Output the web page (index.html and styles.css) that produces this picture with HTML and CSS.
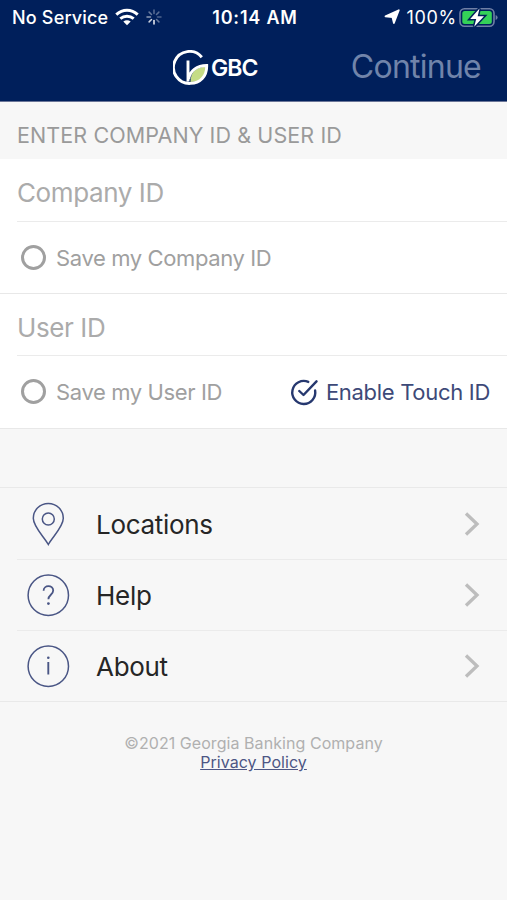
FILE: index.html
```html
<!DOCTYPE html>
<html lang="en">
<head>
<meta charset="utf-8">
<meta name="viewport" content="width=device-width, initial-scale=1">
<title>GBC</title>
<link rel="stylesheet" href="styles.css">
</head>
<body>
<header class="top">
  <div class="status">
    <div class="status-left">
      <span class="carrier">No Service</span>
      <svg class="wifi" width="24" height="18" viewBox="0 0 24 18" fill="none" stroke="#fff" stroke-width="3">
        <path d="M1.300 6.600C7.600.800 16.400.800 22.700 6.600"/>
        <path d="M5.300 10.600C9.200 7.300 14.800 7.300 18.700 10.600"/>
        <path d="M12 17.300 8.300 13.600Q12 10.900 15.700 13.600Z" fill="#fff" stroke="none"/>
      </svg>
      <svg class="spinner" width="16" height="16" viewBox="0 0 16 16" stroke="#fff" stroke-width="1.500" stroke-linecap="round">
        <path d="M8 1v3.500" opacity=".35"/><path d="M12.900 3.100 10.500 5.500" opacity=".35"/><path d="M15 8h-3.500" opacity=".3"/><path d="m12.900 12.900-2.400-2.400" opacity=".4"/><path d="M8 15v-3.500" opacity=".95"/><path d="m3.100 12.900 2.400-2.400" opacity=".8"/><path d="M1 8h3.500" opacity=".55"/><path d="m3.100 3.100 2.400 2.400" opacity=".4"/>
      </svg>
    </div>
    <span class="time">10:14 AM</span>
    <div class="status-right">
      <svg class="arrow" width="16" height="16" viewBox="0 0 16 16"><path d="M14.800 1.200 9.900 14 8.500 8.200 1.500 7.300Z" fill="#fff" stroke="#fff" stroke-width="1.800" stroke-linejoin="round"/></svg>
      <span class="percent">100%</span>
      <svg class="battery" width="39" height="21" viewBox="0 0 39 21">
        <rect x="1" y="1.800" width="34" height="17.500" rx="4.500" fill="none" stroke="#6f7fa5" stroke-width="1.600"/>
        <rect x="3.300" y="4" width="29.500" height="13" rx="2.500" fill="#34d158"/>
        <path d="M36.600 8v5q2-.7 2-2.500T36.600 8Z" fill="#6f7fa5"/>
        <path d="M20.500 1.500 11.200 12h6l-2 7.700L25 9.300h-6.300Z" fill="#fff" stroke="#001f5b" stroke-width="3" paint-order="stroke"/>
      </svg>
    </div>
  </div>
  <div class="nav">
    <div class="brand">
      <svg class="logo" width="36" height="36" viewBox="0 0 36 36" fill="none">
        <path d="M17.500 32C17.500 22 23 17 33.500 16.500 33.500 26 28 32 17.500 32Z" fill="#c5dc86"/>
        <path d="M28.800 7.200A16 16 0 1 0 17.500 33.400C27 33.400 34 26.500 33.700 15.500 24 15.500 17 20.500 15.700 29M15 31.500V10.500" stroke="#fff" stroke-width="2.900"/>
      </svg>
      <span class="brand-name">GBC</span>
    </div>
    <span class="continue">Continue</span>
  </div>
</header>
<main>
  <h1 class="caption"><span>ENTER COMPANY ID &amp; USER ID</span></h1>
  <section class="group">
    <div class="field"><span class="company">Company ID</span></div>
    <div class="save"><i class="radio"></i><span class="save-company">Save my Company ID</span></div>
  </section>
  <section class="group">
    <div class="field"><span class="user">User ID</span></div>
    <div class="save">
      <i class="radio"></i><span class="save-user">Save my User ID</span>
      <div class="touch">
        <svg width="28" height="28" viewBox="0 0 28 28" fill="none" stroke="#26386f" stroke-width="2.400" stroke-linecap="round" stroke-linejoin="round"><path d="M18.300 3.900A11.500 11.500 0 1 0 25.100 12.500"/><path d="m9.300 13 4.200 4L26.500 3.300"/></svg>
        <span class="touch-label">Enable Touch ID</span>
      </div>
    </div>
  </section>
  <nav class="menu">
    <div class="item">
      <svg class="icon" width="44" height="44" viewBox="0 0 44 44" fill="none" stroke="#4a5685" stroke-width="1.500"><path d="M22.300 42.500C18.300 35 7.300 25 7.300 16.300a15 14.800 0 0 1 30 0C37.300 25 26.300 35 22.300 42.500Z"/><circle cx="22.300" cy="17" r="6"/></svg>
      <span class="locations">Locations</span>
      <svg class="chevron" width="16" height="26" viewBox="0 0 16 26"><path d="m2 2.500 11 10.500L2 23.500"/></svg>
    </div>
    <div class="item">
      <svg class="icon" width="44" height="44" viewBox="0 0 44 44" fill="none" stroke="#4a5685" stroke-width="1.500"><circle cx="22.300" cy="22.300" r="20.200"/><path d="M17.600 17.800c0-6.200 9.600-6 9.600-.2 0 4.200-4.800 4.200-4.800 8.700" stroke-width="1.800"/><circle cx="22.400" cy="30.600" r="1.400" fill="#4a5685" stroke="none"/></svg>
      <span class="help">Help</span>
      <svg class="chevron" width="16" height="26" viewBox="0 0 16 26"><path d="m2 2.500 11 10.500L2 23.500"/></svg>
    </div>
    <div class="item">
      <svg class="icon" width="44" height="44" viewBox="0 0 44 44" fill="none" stroke="#4a5685" stroke-width="1.500"><circle cx="22.300" cy="22.300" r="20.200"/><path d="M22.300 18v12.500" stroke-width="1.900"/><circle cx="22.300" cy="13.800" r="1.300" fill="#4a5685" stroke="none"/></svg>
      <span class="about">About</span>
      <svg class="chevron" width="16" height="26" viewBox="0 0 16 26"><path d="m2 2.500 11 10.500L2 23.500"/></svg>
    </div>
  </nav>
</main>
<footer>
  <span class="copyright">©2021 Georgia Banking Company</span>
  <a class="privacy">Privacy Policy</a>
</footer>
</body>
</html>
```
FILE: styles.css
```css
* { box-sizing: border-box; }
body { margin: 0; height: 900px; background: #f7f7f7; font-family: Inter, "Liberation Sans", sans-serif; white-space: nowrap; }
svg { display: block; flex: none; }
.top { height: 102px; background: #001f5b; color: #fff; border-bottom: 1px solid #6b7698; }
.status { height: 34px; display: grid; grid-template-columns: 1fr auto 1fr; align-items: center; padding: 0 9px 0 12px; font-size: 18px; }
.status-left, .status-right { display: flex; align-items: center; }
.status-right { justify-content: flex-end; }
.carrier { font-weight: 500; letter-spacing: .18px; }
.wifi { margin-left: 7px; }
.spinner { margin-left: 7px; }
.time { font-weight: 600; letter-spacing: .8px; }
.percent { margin: 0 2px 0 6px; letter-spacing: .7px; }
.nav { height: 66px; display: flex; align-items: center; justify-content: space-between; padding: 0 26px 0 173px; }
.brand { display: flex; align-items: center; gap: 2px; }
.logo { margin-top: 2px; }
.brand-name { font-size: 23px; font-weight: 600; letter-spacing: -.9px; padding-top: 2px; }
.continue { font-size: 32px; color: #7184aa; letter-spacing: -.75px; padding-bottom: 2px; }
.caption { margin: 0; height: 57px; padding: 9px 17px 0; display: flex; align-items: center; font-size: 21.500px; font-weight: 400; color: #9a9a9a; letter-spacing: .1px; }
.group { background: #fff; border-bottom: 1px solid #e8e8e8; }
.group:first-of-type { height: 135px; }
.group:last-of-type { height: 135px; }
.field { height: 63px; margin-left: 17px; padding-top: 5px; display: flex; align-items: center; border-bottom: 1px solid #ebebeb; font-size: 26px; color: #ababab; letter-spacing: -.4px; }
.group:last-of-type .field { height: 62px; }
.save { height: 71px; display: flex; align-items: center; padding: 0 17px 0 21px; font-size: 22px; color: #a0a0a0; letter-spacing: -.38px; }
.radio { width: 25px; height: 25px; border: 3px solid #a0a0a0; border-radius: 50%; margin-right: 10px; flex: none; }
.touch { margin-left: auto; display: flex; align-items: center; gap: 8px; color: #3d4978; letter-spacing: -.3px; }
.menu { margin-top: 58px; border-top: 1px solid #e9e9e9; border-bottom: 1px solid #e9e9e9; }
.item { height: 71px; margin-left: 17px; display: flex; align-items: center; padding: 0 27px 0 9px; font-size: 26px; color: #262626; letter-spacing: -.3px; }
.item + .item { border-top: 1px solid #ebebeb; }
.icon { margin-right: 26px; }
.locations { padding-top: 1px; }
.chevron { margin-left: auto; fill: none; stroke: #bdbdbd; stroke-width: 3.300; }
footer { padding-top: 32px; display: flex; flex-direction: column; align-items: center; font-size: 16px; line-height: 19px; color: #b0b0b0; letter-spacing: .06px; }
.privacy { color: #4d5684; text-decoration: underline; }
```
